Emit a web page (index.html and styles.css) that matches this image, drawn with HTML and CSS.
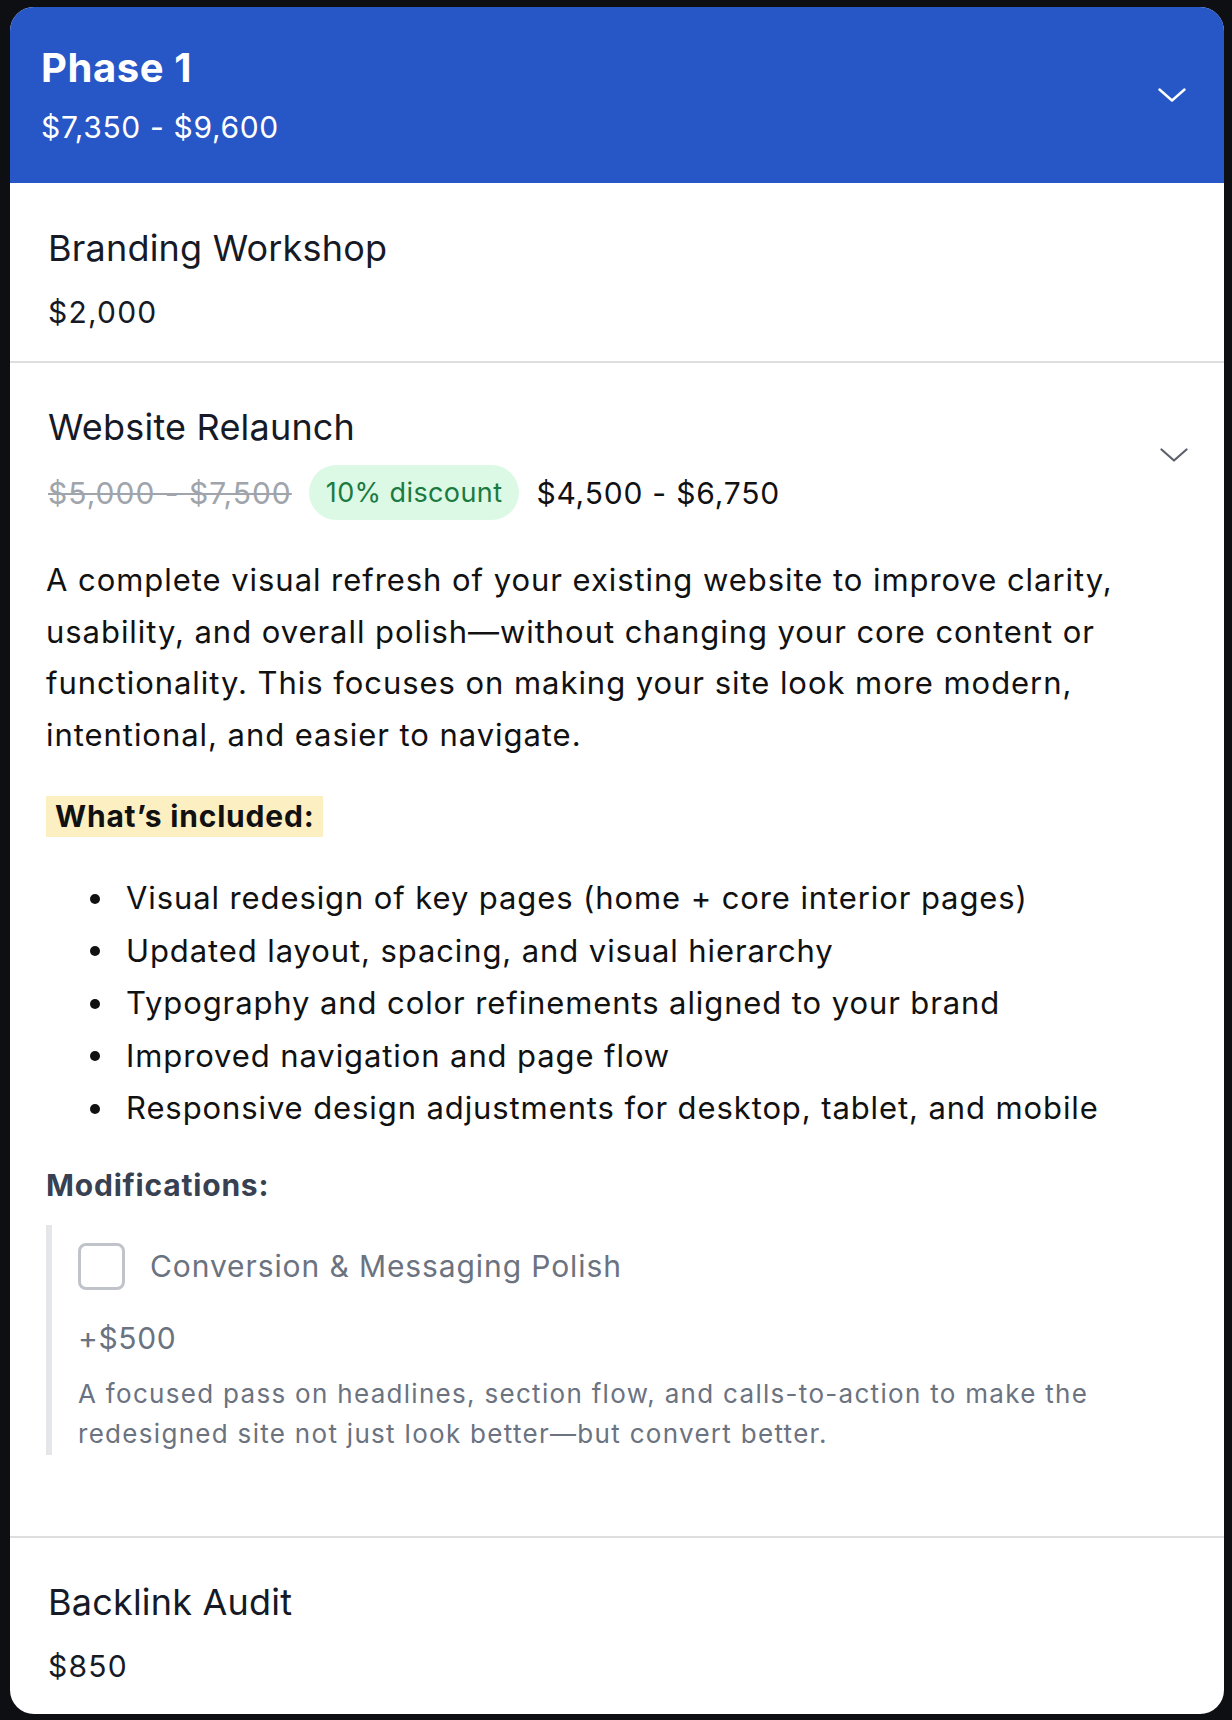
FILE: index.html
```html
<!DOCTYPE html>
<html lang="en">
<head>
<meta charset="utf-8">
<title>Phase 1</title>
<link rel="stylesheet" href="styles.css">
</head>
<body>
<div class="card">
  <header class="phase-head">
    <div class="phase-info">
      <div class="phase-title">Phase 1</div>
      <div class="phase-price">$7,350 - $9,600</div>
    </div>
    <svg class="chev chev-white" width="28" height="14" viewBox="0 0 28 14"><path d="M1.5 1.5 L14 12.5 L26.5 1.5" fill="none" stroke="#fff" stroke-width="2.4" stroke-linecap="round" stroke-linejoin="round"/></svg>
  </header>

  <section class="item">
    <div class="item-title">Branding Workshop</div>
    <div class="item-price">$2,000</div>
  </section>

  <section class="item item-open">
    <div class="item-head">
      <div class="item-head-text">
        <div class="item-title">Website Relaunch</div>
        <div class="price-row">
          <span class="old-price">$5,000 - $7,500</span>
          <span class="pill">10% discount</span>
          <span class="new-price">$4,500 - $6,750</span>
        </div>
      </div>
      <svg class="chev chev-gray" width="28" height="14" viewBox="0 0 28 14"><path d="M1.5 1.5 L14 12.5 L26.5 1.5" fill="none" stroke="#5b616b" stroke-width="2.2" stroke-linecap="round" stroke-linejoin="round"/></svg>
    </div>
    <p class="desc">A complete visual refresh of your existing website to improve clarity, usability, and overall polish—without changing your core content or functionality. This focuses on making your site look more modern, intentional, and easier to navigate.</p>
    <div class="included"><span class="hl">What’s included:</span></div>
    <ul class="features">
      <li>Visual redesign of key pages (home + core interior pages)</li>
      <li>Updated layout, spacing, and visual hierarchy</li>
      <li>Typography and color refinements aligned to your brand</li>
      <li>Improved navigation and page flow</li>
      <li>Responsive design adjustments for desktop, tablet, and mobile</li>
    </ul>
    <div class="mods-label">Modifications:</div>
    <div class="mod">
      <label class="mod-row">
        <span class="checkbox"></span>
        <span class="mod-name">Conversion &amp; Messaging Polish</span>
      </label>
      <div class="mod-price">+$500</div>
      <p class="mod-desc">A focused pass on headlines, section flow, and calls-to-action to make the redesigned site not just look better—but convert better.</p>
    </div>
  </section>

  <section class="item item-last">
    <div class="item-title">Backlink Audit</div>
    <div class="item-price">$850</div>
  </section>
</div>
</body>
</html>
```

FILE: styles.css
```css
* { box-sizing: border-box; }
html, body {
  margin: 0;
  padding: 0;
  background: #0e0f13;
}
body {
  font-family: Inter, "Noto Sans", "Liberation Sans", sans-serif;
  height: 1720px;
  padding: 7px 8px 0 10px;
}
.card {
  width: 1214px;
  background: #fff;
  border-radius: 24px;
  overflow: hidden;
}
.phase-head {
  height: 176px;
  background: #2756c6;
  color: #fff;
  display: flex;
  align-items: center;
  justify-content: space-between;
  padding: 0 38px 0 31px;
}
.phase-title {
  font-size: 40px;
  font-weight: 700;
  line-height: 48px;
  letter-spacing: 0.6px;
}
.phase-price {
  font-size: 30px;
  line-height: 40px;
  margin-top: 15px;
  letter-spacing: 0.65px;
}
.chev { display: block; flex: none; }
.item {
  padding: 41px 36px 29px 36px;
  border-bottom: 2px solid #dedede;
  color: #161a26;
}
.item-open { padding-top: 40px; padding-bottom: 81px; }
.item-last { border-bottom: none; padding-top: 40px; padding-bottom: 28px; }
.item-title {
  font-size: 36px;
  line-height: 48px;
  letter-spacing: 0.2px;
  margin-left: 2px;
}
.item-price {
  font-size: 30px;
  line-height: 40px;
  margin-top: 20px;
  margin-left: 2px;
  letter-spacing: 1.2px;
}
.item-head {
  display: flex;
  justify-content: space-between;
  align-items: center;
}
.chev-gray { margin-bottom: 14px; }
.price-row {
  display: flex;
  align-items: center;
  gap: 17px;
  margin-top: 14px;
  margin-left: 2px;
  font-size: 30px;
}
.old-price {
  color: #a0a4ab;
  text-decoration: line-through;
  text-decoration-thickness: 2px;
  letter-spacing: 1px;
}
.pill {
  height: 55px;
  padding: 0 17px;
  border-radius: 28px;
  background: #dcf9e5;
  color: #1b7a40;
  font-size: 27px;
  letter-spacing: 0.4px;
  display: flex;
  align-items: center;
}
.new-price { color: #111; letter-spacing: 0.8px; }
.desc {
  margin: 34px 0 0;
  font-size: 31px;
  letter-spacing: 0.95px;
  line-height: 51.6px;
  color: #111;
}
.included { margin-top: 36px; }
.hl {
  display: inline-block;
  background: #fcefc2;
  font-weight: 700;
  font-size: 30px;
  letter-spacing: 0.8px;
  line-height: 41px;
  padding: 0 9px;
  color: #111;
}
.features {
  list-style: none;
  margin: 35px 0 0;
  padding: 0;
}
.features li {
  display: flex;
  align-items: center;
  font-size: 31px;
  letter-spacing: 0.9px;
  line-height: 52.5px;
  color: #111;
}
.features li::before {
  content: "";
  flex: none;
  width: 10px;
  height: 10px;
  border-radius: 50%;
  background: #111;
  margin: 0 26px 0 44px;
}
.mods-label {
  margin-top: 30px;
  font-size: 30px;
  letter-spacing: 0.8px;
  font-weight: 700;
  line-height: 40px;
  color: #374151;
}
.mod {
  margin-top: 20px;
  border-left: 6px solid #e4e6ea;
  padding: 18px 0 0 26px;
}
.mod-row {
  display: flex;
  align-items: center;
  gap: 25px;
}
.checkbox {
  width: 47px;
  height: 47px;
  border: 3px solid #c0c4ca;
  border-radius: 8px;
  flex: none;
}
.mod-name {
  font-size: 30px;
  letter-spacing: 0.9px;
  color: #6b7280;
}
.mod-price {
  margin-top: 28px;
  font-size: 30px;
  letter-spacing: 0.6px;
  line-height: 40px;
  color: #6b7280;
}
.mod-desc {
  margin: 16px 0 0;
  font-size: 26px;
  letter-spacing: 1.3px;
  line-height: 40.5px;
  color: #6b7280;
}
```
